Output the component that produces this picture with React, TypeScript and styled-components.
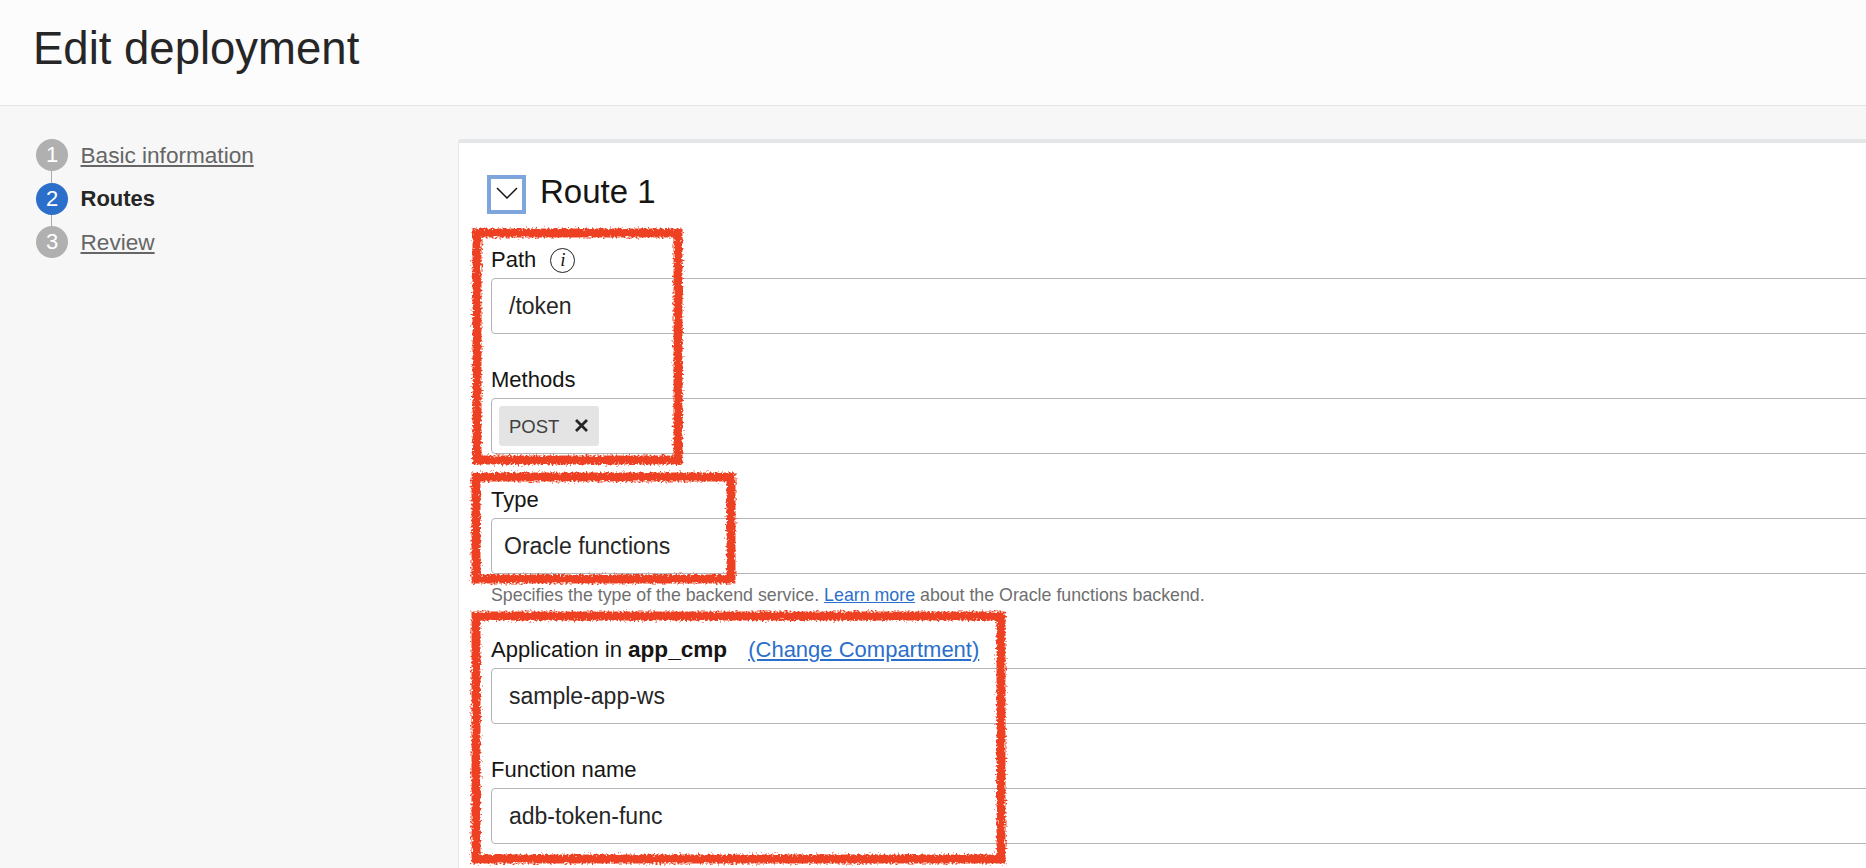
import styled, { createGlobalStyle } from "styled-components";

const GlobalStyle = createGlobalStyle`
  html, body {
    margin: 0;
    padding: 0;
    background: #f7f7f7;
    font-family: "Liberation Sans", Arial, sans-serif;
    color: #161513;
  }
`;

const Page = styled.div`
  position: relative;
  width: 1866px;
  height: 868px;
  overflow: hidden;
  display: flex;
  flex-direction: column;
`;

const Header = styled.header`
  height: 106px;
  box-sizing: border-box;
  flex-shrink: 0;
  padding: 21px 0 0 33px;
  background: #fcfcfc;
  border-bottom: 1px solid #e5e5e5;
`;

const Title = styled.h1`
  margin: 0;
  font-size: 45.5px;
  line-height: 56px;
  font-weight: 400;
  color: #262626;
`;

const Body = styled.div`
  flex: 1;
  display: flex;
  min-height: 0;
`;

const Sidebar = styled.nav`
  width: 458px;
  flex-shrink: 0;
  box-sizing: border-box;
  padding: 33px 0 0 36px;
`;

const Step = styled.div`
  display: flex;
  align-items: center;
  gap: 12.5px;
  height: 32px;
  margin-bottom: 11.5px;
`;

const StepCircle = styled.span<{ $active?: boolean; $last?: boolean }>`
  position: relative;
  width: 32px;
  height: 32px;
  border-radius: 50%;
  background: ${(p) => (p.$active ? "#2b6fca" : "#b0b0b0")};
  color: #fff;
  font-size: 22px;
  line-height: 32px;
  text-align: center;

  &::after {
    content: "";
    display: ${(p) => (p.$last ? "none" : "block")};
    position: absolute;
    left: 15px;
    top: 32px;
    width: 1px;
    height: 12px;
    background: #a9a9a9;
  }
`;

const StepLink = styled.a`
  padding-top: 2px;
  font-size: 22.6px;
  color: #666;
  text-decoration: underline;
`;

const StepCurrent = styled.span`
  padding-top: 1px;
  font-size: 22px;
  font-weight: 700;
  color: #262626;
`;

const Panel = styled.main`
  flex: 1;
  min-width: 0;
  overflow: hidden;
  box-sizing: border-box;
  margin-top: 33px;
  background: #fff;
  border-top: 4px solid #e4e6e8;
  border-left: 1px solid #e4e6e8;
  border-top-left-radius: 3px;
  padding: 32px 0 0 28px;
`;

const RouteHeading = styled.div`
  display: flex;
  align-items: center;
  gap: 14px;
  height: 39px;
`;

const Toggle = styled.button`
  width: 39px;
  height: 39px;
  box-sizing: border-box;
  padding: 0 0 4px;
  display: flex;
  align-items: center;
  justify-content: center;
  background: #fff;
  border: 4px solid #7ea6dc;
`;

const RouteTitle = styled.h2`
  margin: 0;
  padding-bottom: 5px;
  font-size: 33px;
  font-weight: 400;
  color: #161513;
`;

const FormGroup = styled.div<{ $top: number }>`
  margin-top: ${(p) => p.$top}px;
  margin-left: 4px;
`;

const Label = styled.label`
  display: flex;
  align-items: center;
  height: 24px;
  font-size: 22px;
  color: #161513;
  margin-bottom: 6px;
`;

const Compartment = styled.b`
  font-size: 22.6px;
`;

const InfoIcon = styled.span`
  width: 25px;
  height: 25px;
  box-sizing: border-box;
  margin-left: 14px;
  border: 1.5px solid #222;
  border-radius: 50%;
  font-family: "Liberation Serif", serif;
  font-style: italic;
  font-size: 19px;
  line-height: 22px;
  text-align: center;
`;

const ChangeLink = styled.a`
  margin-left: 21px;
  color: #2b6fca;
  text-decoration: underline;
`;

const Field = styled.div<{ $pad?: number }>`
  width: 1500px;
  height: 56px;
  box-sizing: border-box;
  display: flex;
  align-items: center;
  padding-left: ${(p) => p.$pad ?? 17}px;
  border: 1px solid #b3b5ba;
  border-radius: 4px;
  background: #fff;
  font-size: 23px;
  color: #262626;
`;

const Chip = styled.span`
  display: flex;
  align-items: center;
  gap: 15px;
  height: 40px;
  box-sizing: border-box;
  padding: 2px 10px 0 10px;
  background: #e4e4e4;
  border-radius: 3px;
  font-size: 18.5px;
  color: #404040;
`;

const ChipClose = styled.svg`
  margin-bottom: 4px;
`;

const Help = styled.div`
  margin-top: 11px;
  font-size: 17.8px;
  line-height: 20px;
  color: #6f6f6f;
`;

const HelpLink = styled.a`
  color: #2b6fca;
  text-decoration: underline;
`;

const Annotations = styled.svg`
  position: absolute;
  left: 0;
  top: 0;
  pointer-events: none;
`;

const Marker = styled.rect`
  fill: none;
  stroke: #ee4123;
  stroke-width: 9;
`;

export default function App() {
  return (
    <Page>
      <GlobalStyle />
      <Header>
        <Title>Edit deployment</Title>
      </Header>
      <Body>
        <Sidebar>
          <Step>
            <StepCircle>1</StepCircle>
            <StepLink>Basic information</StepLink>
          </Step>
          <Step>
            <StepCircle $active>2</StepCircle>
            <StepCurrent>Routes</StepCurrent>
          </Step>
          <Step>
            <StepCircle $last>3</StepCircle>
            <StepLink>Review</StepLink>
          </Step>
        </Sidebar>
        <Panel>
          <RouteHeading>
            <Toggle aria-label="Collapse route">
              <svg width="22" height="12" viewBox="0 0 22 12" fill="none" stroke="#161513" strokeWidth="1.5">
                <path d="M1 1l10 10L21 1" />
              </svg>
            </Toggle>
            <RouteTitle>Route 1</RouteTitle>
          </RouteHeading>
          <FormGroup $top={34}>
            <Label>
              Path
              <InfoIcon>i</InfoIcon>
            </Label>
            <Field>/token</Field>
          </FormGroup>
          <FormGroup $top={34}>
            <Label>Methods</Label>
            <Field $pad={7}>
              <Chip>
                POST
                <ChipClose width="15" height="15" viewBox="0 0 15 15" stroke="#262626" strokeWidth="2.8">
                  <path d="M2 2l11 11M13 2L2 13" />
                </ChipClose>
              </Chip>
            </Field>
          </FormGroup>
          <FormGroup $top={34}>
            <Label>Type</Label>
            <Field $pad={12}>Oracle functions</Field>
            <Help>
              Specifies the type of the backend service. <HelpLink>Learn more</HelpLink> about the Oracle functions backend.
            </Help>
          </FormGroup>
          <FormGroup $top={33}>
            <Label>
              <span>
                Application in <Compartment>app_cmp</Compartment>
              </span>
              <ChangeLink>(Change Compartment)</ChangeLink>
            </Label>
            <Field>sample-app-ws</Field>
          </FormGroup>
          <FormGroup $top={34}>
            <Label>Function name</Label>
            <Field>adb-token-func</Field>
          </FormGroup>
        </Panel>
      </Body>
      <Annotations width="1866" height="868" viewBox="0 0 1866 868">
        <defs>
          <filter id="rough" x="-5%" y="-5%" width="110%" height="110%">
            <feTurbulence type="fractalNoise" baseFrequency="0.5" numOctaves="3" seed="4" />
            <feDisplacementMap in="SourceGraphic" scale="7" xChannelSelector="R" yChannelSelector="G" />
          </filter>
        </defs>
        <g filter="url(#rough)">
          <Marker x="477" y="233" width="201" height="227" />
          <Marker x="476" y="477" width="255" height="102" />
          <Marker x="476" y="616" width="525" height="243" />
        </g>
      </Annotations>
    </Page>
  );
}
